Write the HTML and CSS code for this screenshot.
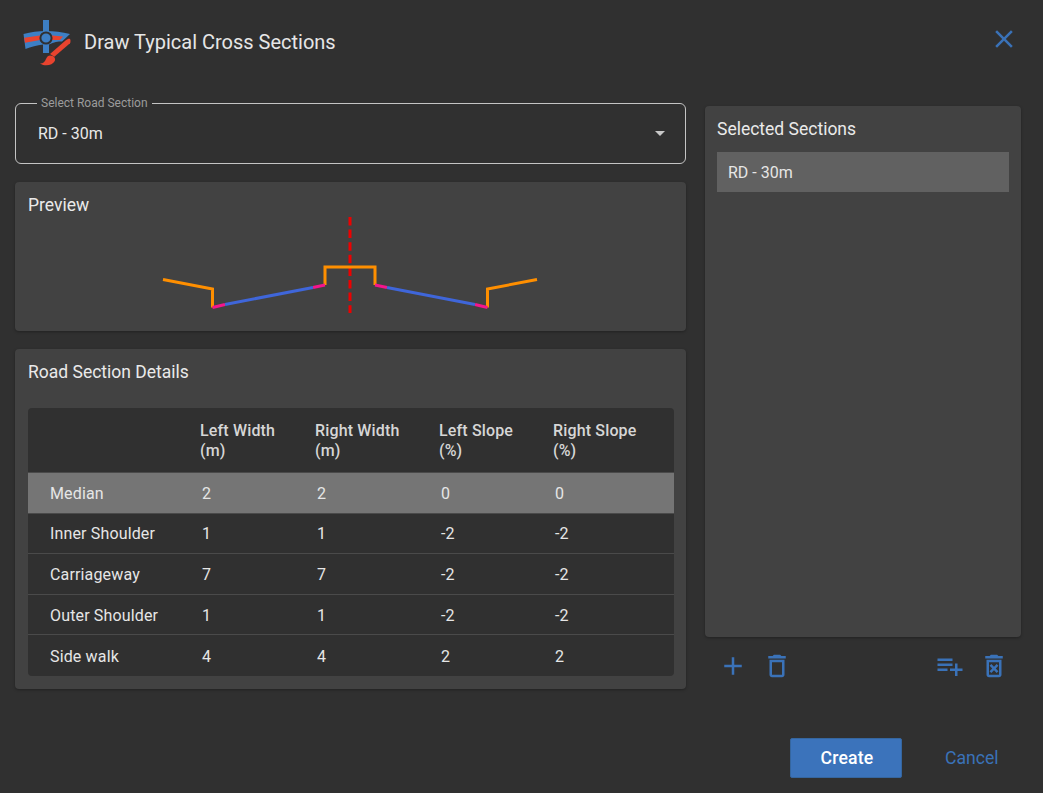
FILE: index.html
```html
<!DOCTYPE html>
<html lang="en">
<head>
<meta charset="utf-8">
<title>Draw Typical Cross Sections</title>
<link rel="stylesheet" href="styles.css">
</head>
<body>
<div class="dialog">
  <header class="dialog-header">
    <svg class="logo" viewBox="23 19 50 50" width="50" height="50" aria-hidden="true">
      <path class="logo-blue" d="M23.5 34 C31 32 38 31 46 31 C54 31 62 32 70 34 L62 41.5 C58 41.5 54 42 49 44.5 L43 44.5 C37 45 31 47 25.5 49 Z"/>
      <rect class="logo-blue" x="43" y="20" width="6" height="33"/>
      <path class="logo-red" d="M24.2 37.8 L40 35.4 L40 40 L25 42.8 Z M52 35.4 L63 36.6 L60 40 L52 40 Z"/>
      <circle class="logo-ring" cx="46" cy="38" r="5.6"/>
      <path class="logo-red" d="M65.5 40.5 C67.5 39 69 38.5 70 39 C70.8 40 70.6 42 70 43.3 L54.3 56.7 L50 54 Z"/>
      <path class="logo-red" d="M50 55.5 C54 55.5 56 58.5 54.8 61 C52.5 65.5 45 66.8 40 63.5 C43.5 63.5 45 61.5 46 59 C47 56.5 48.5 55.5 50 55.5 Z"/>
    </svg>
    <h1 class="dialog-title">Draw Typical Cross Sections</h1>
    <button class="icon-btn close-btn" type="button" aria-label="Close">
      <svg viewBox="0 0 24 24" width="30" height="30"><path d="M19 6.41L17.59 5 12 10.59 6.41 5 5 6.41 10.59 12 5 17.59 6.41 19 12 13.41 17.59 19 19 17.59 13.41 12z"/></svg>
    </button>
  </header>

  <main class="dialog-body">
    <div class="left-col">
      <fieldset class="select-field">
        <legend class="select-label">Select Road Section</legend>
        <div class="select-row">
          <span>RD - 30m</span>
          <span class="select-arrow"></span>
        </div>
      </fieldset>

      <section class="card preview-card">
        <h2 class="card-title">Preview</h2>
        <svg class="preview-svg" viewBox="0 0 671 100" width="671" height="100" aria-hidden="true">
          <path class="sec dash" d="M335 1 V97"/>
          <path class="sec orange" d="M148 63.5 L197.5 73 V91.5 M310 69 V51 H360 V69 M472.5 91.5 V73 L522 63.5"/>
          <path class="sec pink" d="M197.5 91.5 L210 88.5 M298 71.5 L310 69 M360 69 L372 71.5 M460 88.5 L472.5 91.5"/>
          <path class="sec blue" d="M210 88.5 L298 71.5 M372 71.5 L460 88.5"/>
        </svg>
      </section>

      <section class="card details-card">
        <h2 class="card-title details-title">Road Section Details</h2>
        <table class="details-table">
          <colgroup>
            <col class="col-name"><col class="col-lw"><col class="col-rw"><col class="col-ls"><col class="col-rs">
          </colgroup>
          <thead>
            <tr><th></th><th>Left Width<br>(m)</th><th>Right Width<br>(m)</th><th>Left Slope<br>(%)</th><th>Right Slope<br>(%)</th></tr>
          </thead>
          <tbody>
            <tr class="is-selected"><td>Median</td><td>2</td><td>2</td><td>0</td><td>0</td></tr>
            <tr><td>Inner Shoulder</td><td>1</td><td>1</td><td>-2</td><td>-2</td></tr>
            <tr><td>Carriageway</td><td>7</td><td>7</td><td>-2</td><td>-2</td></tr>
            <tr><td>Outer Shoulder</td><td>1</td><td>1</td><td>-2</td><td>-2</td></tr>
            <tr><td>Side walk</td><td>4</td><td>4</td><td>2</td><td>2</td></tr>
          </tbody>
        </table>
      </section>
    </div>

    <div class="right-col">
      <section class="card selected-card">
        <h2 class="card-title">Selected Sections</h2>
        <div class="selected-item">RD - 30m</div>
      </section>
      <div class="toolbar">
        <div class="tool-group">
          <button class="icon-btn" type="button" aria-label="Add"><svg viewBox="0 0 24 24" width="30" height="30"><path d="M19 13h-6v6h-2v-6H5v-2h6V5h2v6h6v2z"/></svg></button>
          <button class="icon-btn" type="button" aria-label="Delete"><svg viewBox="0 0 24 24" width="30" height="30"><path d="M6 19c0 1.1.9 2 2 2h8c1.1 0 2-.9 2-2V7H6v12zM8 9h8v10H8V9zm7.5-5l-1-1h-5l-1 1H5v2h14V4z"/></svg></button>
        </div>
        <div class="tool-group">
          <button class="icon-btn" type="button" aria-label="Add all"><svg viewBox="0 0 24 24" width="30" height="30"><path d="M14 10H2v2h12v-2zm0-4H2v2h12V6zm4 8v-4h-2v4h-4v2h4v4h2v-4h4v-2h-4zM2 16h8v-2H2v2z"/></svg></button>
          <button class="icon-btn" type="button" aria-label="Delete all"><svg viewBox="0 0 24 24" width="30" height="30"><path d="M14.12 10.47L12 12.59l-2.13-2.12-1.41 1.41L10.59 14l-2.12 2.12 1.41 1.41L12 15.41l2.12 2.12 1.41-1.41L13.41 14l2.12-2.12zM15.5 4l-1-1h-5l-1 1H5v2h14V4zM6 19c0 1.1.9 2 2 2h8c1.1 0 2-.9 2-2V7H6v12zM8 9h8v10H8V9z"/></svg></button>
        </div>
      </div>
    </div>
  </main>

  <footer class="dialog-footer">
    <button class="btn-primary" type="button">Create</button>
    <button class="btn-text" type="button">Cancel</button>
  </footer>
</div>
</body>
</html>
```

FILE: styles.css
```css
* { box-sizing: border-box; }

html, body {
  margin: 0;
  height: 100%;
  overflow: hidden;
  background: #303030;
}

body {
  font-family: Roboto, "Liberation Sans", sans-serif;
  color: #e8e8e8;
}

.dialog {
  display: flex;
  flex-direction: column;
  height: 793px;
}

.dialog-header {
  display: flex;
  align-items: center;
  height: 84px;
  padding: 0 23px 0 23px;
  flex: none;
}

.logo { display: block; flex: none; margin-top: 4px; }
.logo-blue { fill: #3d7fc4; }
.logo-red { fill: #e8432e; }
.logo-ring { fill: #3d7fc4; stroke: #303030; stroke-width: 2; }

.dialog-title {
  margin: 0 0 0 11px;
  font-size: 20px;
  font-weight: 400;
  color: #e6e6e6;
  flex: 1;
}

.icon-btn {
  display: flex;
  align-items: center;
  justify-content: center;
  width: 44px;
  height: 44px;
  padding: 0;
  border: 0;
  background: none;
  fill: #3a72b8;
}

.close-btn { margin: -6px -6px 0 0; }

.dialog-body {
  display: flex;
  gap: 19px;
  padding: 13px 22px 0 15px;
  flex: none;
}

.left-col {
  display: flex;
  flex-direction: column;
  gap: 18px;
  width: 671px;
  flex: none;
}

.right-col {
  display: flex;
  flex-direction: column;
  width: 316px;
  flex: none;
  padding-top: 9px;
}

.select-field {
  margin: 0;
  padding: 0 21px;
  height: 67px;
  border: 1px solid #c4c4c4;
  border-radius: 6px;
  min-width: 0;
}

.select-label {
  margin-left: 0;
  padding: 0 4px;
  font-size: 12px;
  line-height: 12px;
  color: #9c9c9c;
}

.select-row {
  display: flex;
  align-items: center;
  justify-content: space-between;
  height: 46px;
  font-size: 16px;
  color: #e8e8e8;
  margin-top: 1px;
  padding-left: 1px;
}

.select-arrow {
  width: 0;
  height: 0;
  margin-right: -1px;
  border-left: 5px solid transparent;
  border-right: 5px solid transparent;
  border-top: 5px solid #c8c8c8;
}

.card {
  background: #424242;
  border-radius: 4px;
  box-shadow: 0 1px 3px rgba(0, 0, 0, .3);
}

.card-title {
  margin: 0;
  padding: 12px 13px 0;
  font-size: 17.5px;
  line-height: 22px;
  font-weight: 400;
  color: #eaeaea;
}

.preview-card { height: 149px; }
.preview-svg { display: block; }

.sec { fill: none; stroke-width: 3; stroke-linejoin: miter; }
.dash { stroke: #ee0000; stroke-dasharray: 8.5 4.1; }
.orange { stroke: #ff8f00; }
.pink { stroke: #f5158c; }
.blue { stroke: #3f66da; }

.details-card { height: 340px; padding-bottom: 13px; }

.details-title { padding-top: 12px; padding-bottom: 25px; }

.details-table {
  width: 646px;
  margin-left: 13px;
  table-layout: fixed;
  border-collapse: separate;
  border-spacing: 0;
  border-radius: 4px;
  overflow: hidden;
  background: #303030;
  font-size: 16px;
  letter-spacing: .15px;
  color: #e6e6e6;
}

.col-name { width: 172px; }
.col-lw { width: 115px; }
.col-rw { width: 124px; }
.col-ls { width: 114px; }
.col-rs { width: 121px; }

.details-table th {
  height: 65px;
  padding: 2px 0 0;
  text-align: left;
  font-size: 16px;
  line-height: 20px;
  font-weight: 500;
  color: #d6d6d6;
  border-bottom: 1px solid #4a4a4a;
}

.details-table td {
  height: 40.6px;
  padding: 1px 0 0 2px;
  border-bottom: 1px solid #4a4a4a;
}

.details-table tr:last-child td { border-bottom: 0; }

.details-table td:first-child { padding-left: 22px; }

.is-selected td { background: #757575; }

.selected-card { height: 531px; }

.selected-card .card-title { padding: 12px 12px 0; }

.selected-item {
  margin: 12px 12px 0;
  height: 40px;
  padding: 1px 0 0 11px;
  line-height: 40px;
  font-size: 16px;
  background: #616161;
  color: #e6e6e6;
}

.toolbar {
  display: flex;
  justify-content: space-between;
  padding: 7px 5px 0 6px;
}

.tool-group { display: flex; }

.dialog-footer {
  display: flex;
  align-items: center;
  margin-top: 49px;
  padding-left: 790px;
  flex: none;
}

.btn-primary {
  width: 112px;
  height: 40px;
  padding: 0 0 0 2px;
  border: 1px solid #35669f;
  border-radius: 2px;
  background: #3b73bb;
  color: #fff;
  font: 500 17.6px Roboto, "Liberation Sans", sans-serif;
  letter-spacing: .2px;
}

.btn-text {
  margin-left: 43px;
  padding: 0;
  border: 0;
  background: none;
  color: #3a72b8;
  font: 400 17.6px Roboto, "Liberation Sans", sans-serif;
}
```
